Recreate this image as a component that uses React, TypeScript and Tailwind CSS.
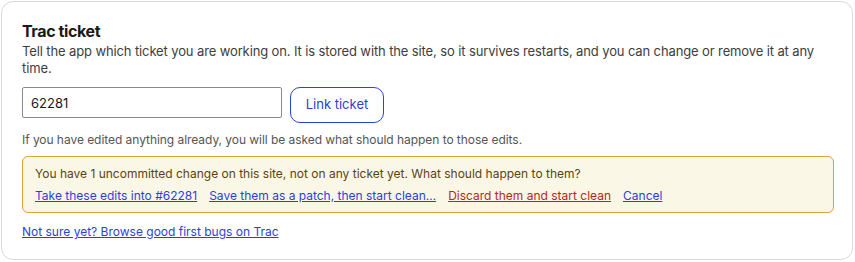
import React from "react";

export default function App() {
  return (
    <div className="w-[855px] h-[262px] bg-white p-px" style={{ fontFamily: "Inter, 'Noto Sans', sans-serif" }}>
      <div className="h-[259px] w-[852px] rounded-[12px] border border-[#d9d9d9] bg-white pl-[20px] pr-[20px] pt-[19px]">
        <h2 className="text-[16px] leading-[20px] font-bold tracking-[-0.4px] text-[#1a1a1a]">Trac ticket</h2>
        <p className="mt-[2px] text-[13px] leading-[17px] tracking-[-0.12px] text-[#3d3d3d]">
          Tell the app which ticket you are working on. It is stored with the site, so it survives restarts, and you can change or remove it at any time.
        </p>
        <div className="mt-[10px] flex items-start gap-[8px]">
          <input
            defaultValue="62281"
            className="h-[31px] w-[260px] rounded-[2px] border border-[#8a8a8a] px-[8px] text-[13px] text-[#1a1a1a] outline-none"
          />
          <button className="h-[36px] w-[94px] rounded-[10px] border border-[#2a43e0] text-[13px] text-[#2a3fd4] bg-white">
            Link ticket
          </button>
        </div>
        <p className="mt-[9px] text-[12px] leading-[16px] tracking-[-0.05px] text-[#555555]">
          If you have edited anything already, you will be asked what should happen to those edits.
        </p>
        <div className="mt-[8px] w-[812px] rounded-[6px] border border-[#d9a43a] bg-[#fbf7e6] px-[12px] pt-[9px] pb-[8px]">
          <p className="text-[12px] leading-[16px] text-[#5a4313]">
            You have 1 uncommitted change on this site, not on any ticket yet. What should happen to them?
          </p>
          <div className="mt-[6px] flex gap-[12px] text-[12px] leading-[16px]">
            <a href="#" className="underline text-[#2b3fe0]">Take these edits into #62281</a>
            <a href="#" className="underline text-[#2b3fe0]">Save them as a patch, then start clean…</a>
            <a href="#" className="underline text-[#b8261e]">Discard them and start clean</a>
            <a href="#" className="underline text-[#2b3fe0]">Cancel</a>
          </div>
        </div>
        <div className="mt-[11px] text-[12px] leading-[16px]">
          <a href="#" className="underline text-[#2b3fe0]">Not sure yet? Browse good first bugs on Trac</a>
        </div>
      </div>
    </div>
  );
}
